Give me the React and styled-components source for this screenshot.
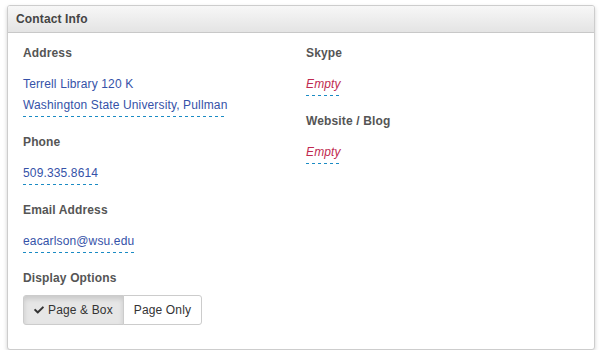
import React from "react"
import styled, { createGlobalStyle } from "styled-components"
import { FaCheck } from "react-icons/fa"

const linkColor = "#3552a8"
const emptyColor = "#c02a50"
const dashColor = "#1a8bc4"

const GlobalStyle = createGlobalStyle`
    body {
        margin: 0;
        background: #fff;
        font-family: "Liberation Sans", Arial, sans-serif;
        font-size: 12px;
        letter-spacing: 0.14px;
        color: #333;
    }
`

const Page = styled.div`
    padding: 5px 0 0 7px;
`

const Panel = styled.div`
    width: 588px;
    height: 345px;
    box-sizing: border-box;
    border: 1px solid #cdcdcd;
    border-radius: 3px;
    background: #fff;
    box-shadow: 0 2px 4px rgba(0, 0, 0, 0.18);
    overflow: hidden;
`

const Header = styled.div`
    height: 27px;
    box-sizing: border-box;
    padding: 0 8px;
    display: flex;
    align-items: center;
    background: linear-gradient(to bottom, #f7f7f7, #e4e4e4);
    border-bottom: 1px solid #c8c8c8;
    font-weight: bold;
    color: #444;
`

const Body = styled.div`
    display: grid;
    grid-template-columns: 283px 1fr;
    padding: 11px 15px 0 15px;
`

const Column = styled.div`
    display: flex;
    flex-direction: column;
    align-items: flex-start;
`

const Field = styled.div`
    display: flex;
    flex-direction: column;
    align-items: flex-start;
    margin-bottom: 16px;
`

const Label = styled.div`
    font-weight: bold;
    color: #555;
    line-height: 18px;
    margin-bottom: ${(p) => (p.$tight ? "8px" : "12px")};
`

/* dashed underline drawn as a gradient so the dash colour stays crisp */
const Editable = styled.div`
    line-height: 21px;
    padding-bottom: 1px;
    color: ${(p) => (p.$empty ? emptyColor : linkColor)};
    font-style: ${(p) => (p.$empty ? "italic" : "normal")};
    background-image: repeating-linear-gradient(
        to right,
        ${dashColor} 0 3px,
        transparent 3px 6px
    );
    background-size: 100% 1px;
    background-position: left bottom;
    background-repeat: no-repeat;
`

const ButtonGroup = styled.div`
    display: inline-flex;
`

const Button = styled.button`
    height: 30px;
    padding: 0 10px;
    font-family: inherit;
    font-size: 12px;
    letter-spacing: 0.14px;
    color: #333;
    display: flex;
    align-items: center;
    gap: 4px;
    border: 1px solid #ccc;
    background: ${(p) => (p.$active ? "#e6e6e6" : "#fff")};
    box-shadow: ${(p) => (p.$active ? "inset 0 3px 5px rgba(0,0,0,0.125)" : "none")};
    cursor: pointer;

    &:first-child {
        border-radius: 3px 0 0 3px;
    }
    &:last-child {
        border-radius: 0 3px 3px 0;
        margin-left: -1px;
    }
`

export default function App() {
    return (
        <Page>
            <GlobalStyle />
            <Panel>
                <Header>Contact Info</Header>
                <Body>
                    <Column>
                        <Field>
                            <Label>Address</Label>
                            <Editable>
                                Terrell Library 120 K
                                <br />
                                Washington State University, Pullman
                            </Editable>
                        </Field>
                        <Field>
                            <Label>Phone</Label>
                            <Editable>509.335.8614</Editable>
                        </Field>
                        <Field>
                            <Label>Email Address</Label>
                            <Editable>eacarlson@wsu.edu</Editable>
                        </Field>
                        <Field>
                            <Label $tight>Display Options</Label>
                            <ButtonGroup>
                                <Button $active>
                                    <FaCheck size={10} /> Page &amp; Box
                                </Button>
                                <Button>Page Only</Button>
                            </ButtonGroup>
                        </Field>
                    </Column>
                    <Column>
                        <Field>
                            <Label>Skype</Label>
                            <Editable $empty>Empty</Editable>
                        </Field>
                        <Field>
                            <Label>Website / Blog</Label>
                            <Editable $empty>Empty</Editable>
                        </Field>
                    </Column>
                </Body>
            </Panel>
        </Page>
    )
}
